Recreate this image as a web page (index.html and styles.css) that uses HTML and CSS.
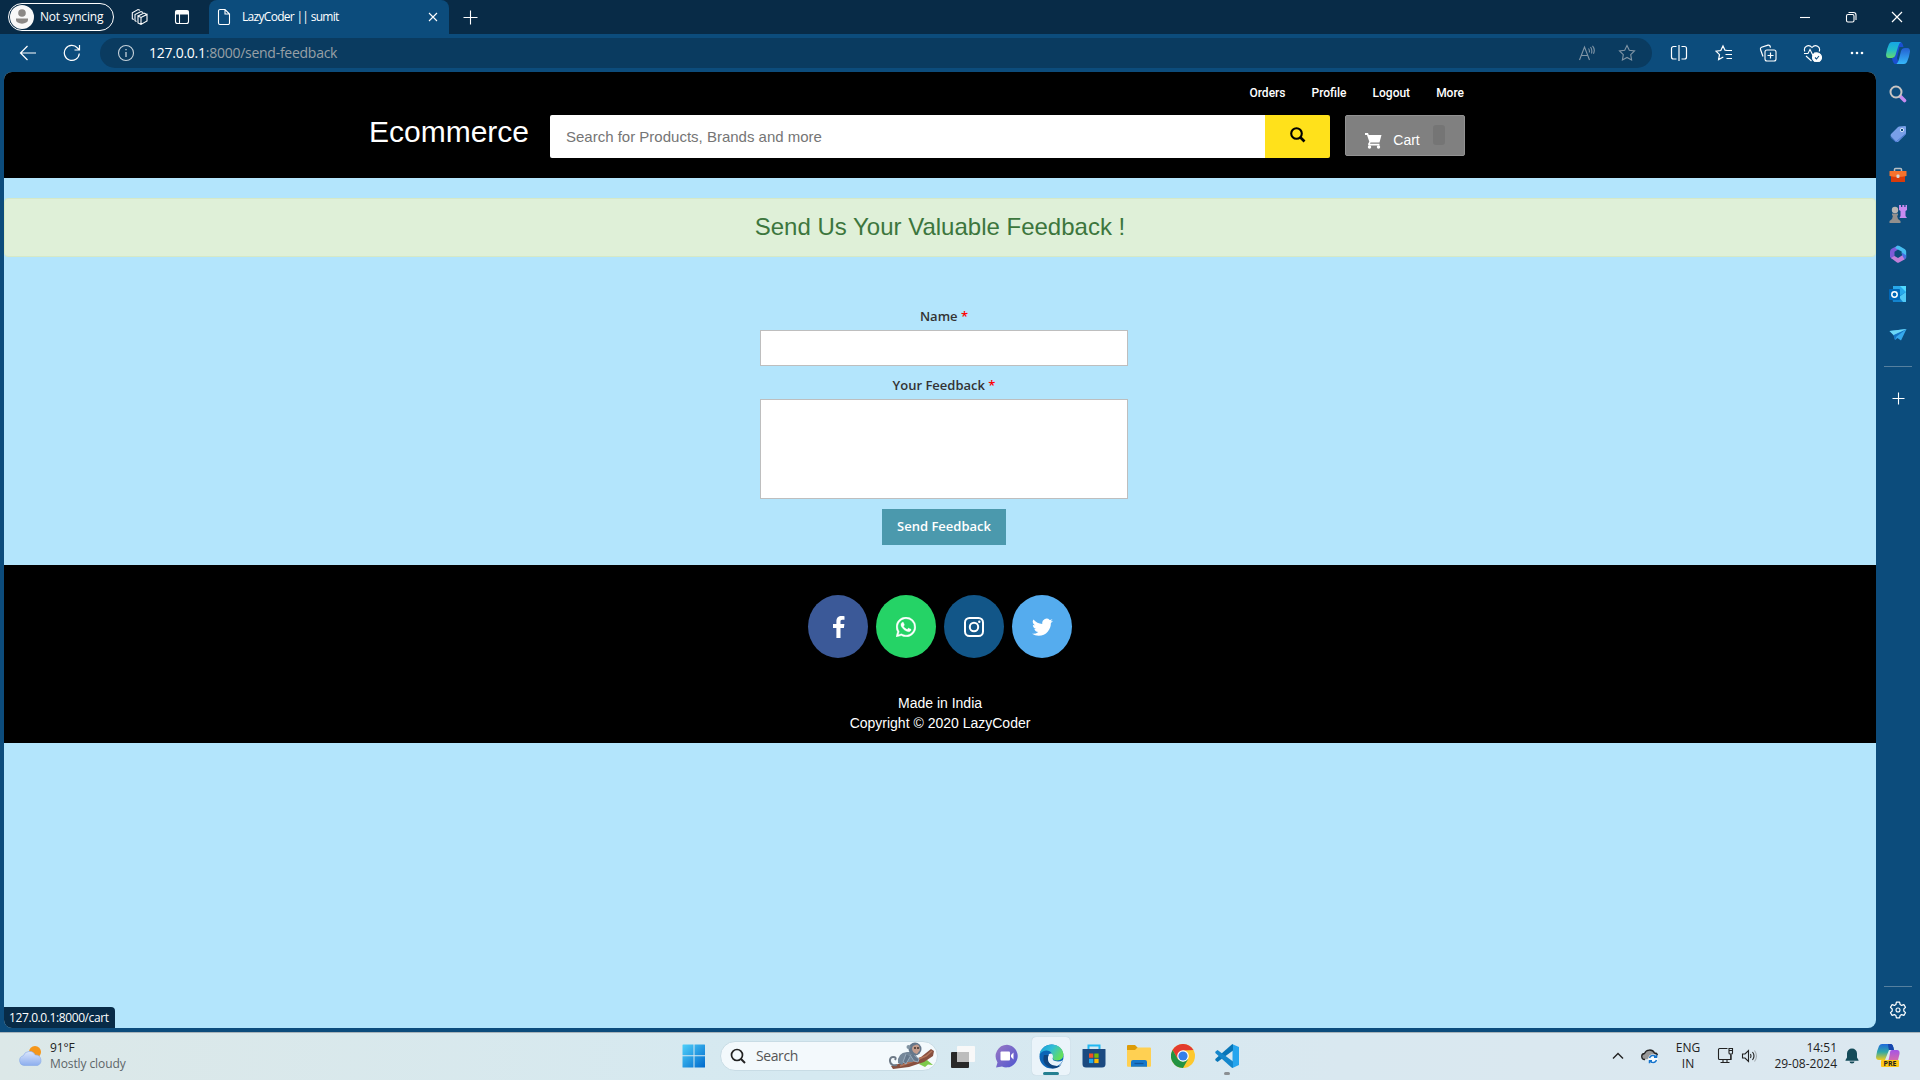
FILE: index.html
```html
<!DOCTYPE html>
<html lang="en">
<head>
<meta charset="utf-8">
<title>LazyCoder || sumit</title>
<link rel="stylesheet" href="styles.css">
</head>
<body>
<div class="browser">
  <header class="titlebar">
    <div class="profile"><svg width="24" height="24" viewBox="0 0 24 24"><circle cx="12" cy="12" r="12" fill="#f8f8f8"/><circle cx="12" cy="8" r="3.8" fill="#8b8886"/><path d="M6 13.500h12v1.500a6 3.700 0 0 1-12 0z" fill="#8b8886"/></svg><span>Not syncing</span></div>
    <svg class="workspaces line" width="18" height="18" viewBox="0 0 18 18"><path d="M7 8l3 1.500 6-3v6.500l-6 3.500-3-1.500zM10 9.500v7M7 8l6-3 3 1.500M5.500 13.500L4 12.700V6.500l6-3 2 .9M2.800 11.500l-1.500-.7V4.700L7 1.500l2 .8"/></svg>
    <svg class="tabs-menu line" width="16" height="16" viewBox="0 0 16 16"><rect x="1.500" y="1.500" width="13" height="13" rx="2"/><path d="M2 2h12v3H2z" fill="#fff"/><path d="M5.500 5v9.500"/></svg>
    <div class="tab">
      <svg class="line" width="14" height="18" viewBox="0 0 14 18"><path d="M3 1.500h5l4.500 4.500v9a1.500 1.500 0 0 1-1.500 1.500h-8A1.500 1.500 0 0 1 1.500 15V3A1.500 1.500 0 0 1 3 1.500zM8 1.500V6h4.500"/></svg>
      <span class="tab-title">LazyCoder || sumit</span>
      <svg class="line" width="10" height="10" viewBox="0 0 10 10"><path d="M1 1l8 8M9 1l-8 8"/></svg>
    </div>
    <svg class="new-tab line" width="15" height="15" viewBox="0 0 15 15"><path d="M7.500.5v14M.5 7.500h14"/></svg>
    <div class="window-buttons line">
      <svg width="12" height="12" viewBox="0 0 12 12"><path d="M1 6.500h10"/></svg>
      <svg width="12" height="12" viewBox="0 0 12 12"><rect x="1.500" y="3.500" width="7.500" height="7.500" rx="1.500"/><path d="M3.500 1.500H8.500A2.500 2.500 0 0 1 11 4V9"/></svg>
      <svg width="12" height="12" viewBox="0 0 12 12"><path d="M1 1l10 10M11 1L1 11" stroke-width="1.200"/></svg>
    </div>
  </header>

  <div class="toolbar">
    <div class="tool line"><svg width="18" height="16" viewBox="0 0 18 16"><path d="M8.500 1L1.500 8l7 7M1.500 8H17" stroke-width="1.200"/></svg></div>
    <div class="tool line"><svg width="18" height="18" viewBox="0 0 18 18"><path d="M16.300 9.500A7.500 7.500 0 1 1 14.500 4l2 2M16.500 1v5h-5" stroke-width="1.200"/></svg></div>
    <div class="address">
      <svg class="line dim-light" width="18" height="18" viewBox="0 0 18 18"><circle cx="9" cy="9" r="7.500"/><path d="M9 8v5M9 5v1.300" stroke-width="1.300"/></svg>
      <span class="url"><b>127.0.0.1</b>:8000/send-feedback</span>
      <svg class="line dim" width="18" height="16" viewBox="0 0 18 16"><path d="M1.500 15L6.500 2l5 13M3.300 10.500h6.500M10.500 3.500q1.300 1.500.8 4M12.500 2q2 2.500 1 6.500M14.500.8q3 3.500 1 8"/></svg>
      <svg class="line dim star" width="18" height="18" viewBox="0 0 18 18"><path d="M9 1.500l2.300 4.800 5.200.7-3.800 3.700.9 5.300L9 13.500 4.400 16l.9-5.300L1.500 7l5.200-.7z"/></svg>
    </div>
    <div class="tool line"><svg width="18" height="18" viewBox="0 0 18 18"><path d="M6.500 2.500h-3a2 2 0 0 0-2 2v8.500a2 2 0 0 0 2 2h3M11.500 2.500h3a2 2 0 0 1 2 2v8.500a2 2 0 0 1-2 2h-3M9 1v16" stroke-width="1.200"/></svg></div>
    <div class="tool line"><svg width="18" height="18" viewBox="0 0 18 18"><path d="M12 6.500l-2-.3-2-4.200-2.200 4.500-4.800.7 3.500 3.400-.9 5 4.700-2.600M10.500 6.500H17M10.500 10.500H17M11.500 14.500H17" stroke-width="1.200"/></svg></div>
    <div class="tool line"><svg width="18" height="18" viewBox="0 0 18 18"><rect x="6" y="6" width="11" height="11" rx="2"/><path d="M11.500 8.500v6M8.500 11.500h6M4 12.500l-2.500-7q-.5-1.500 1-2.200l6.500-2.200q2-.5 2.500 2.500" stroke-width="1.200"/></svg></div>
    <div class="tool line"><svg width="19" height="18" viewBox="0 0 19 18"><path d="M1.800 7.500C0 3 5.500-.5 9 3.500 12.500-.5 18 3 16.200 7.500M1 9.500h4l2-4 3 6 1.500-2.500h3M3 12l5.500 5"/><circle cx="14" cy="13.500" r="4.500" fill="#fff"/><path d="M12 13.500l1.500 1.500 2.500-3" stroke="#0c4c7c"/></svg></div>
    <div class="tool"><svg width="14" height="4" viewBox="0 0 14 4" fill="#fff"><circle cx="2" cy="2" r="1.300"/><circle cx="7" cy="2" r="1.300"/><circle cx="12" cy="2" r="1.300"/></svg></div>
    <div class="tool copilot"><svg width="24" height="24" viewBox="0 0 24 24"><defs><linearGradient id="cpA" x1="0" y1="0" x2="0" y2="1"><stop offset="0" stop-color="#15a5e5"/><stop offset=".5" stop-color="#23bdc7"/><stop offset="1" stop-color="#67d96c"/></linearGradient><linearGradient id="cpB" x1="0" y1="1" x2="0" y2="0"><stop offset="0" stop-color="#36b8fb"/><stop offset="1" stop-color="#245fd1"/></linearGradient></defs><path d="M9 1h5q2.500 0 3.500 5h-4L11 17l2 6H9.500Q7 23 6 17h2z" fill="#1a4fd0"/><path d="M6 1h9q-2 1-3 5l-2.500 8q-1 3-4 3H2.500Q0 17 0 13.500Q1 7 3 3q1-2 3-2z" fill="url(#cpA)"/><path d="M18 23h-7.500q1.500-1 2.500-5l2-8q1-3 4-3h2.500q2.500 0 2.500 3.500Q23 17 21 21q-1 2-3 2z" fill="url(#cpB)"/></svg></div>
  </div>

  <div class="workspace">
    <main class="page">
      <nav class="shop-nav">
        <div class="shop-inner">
          <div class="links"><a>Orders</a><a>Profile</a><a>Logout</a><a>More</a></div>
          <div class="search-row">
            <h1 class="brand">Ecommerce</h1>
            <div class="search-box"><span>Search for Products, Brands and more</span></div>
            <button class="search-button"><svg width="16" height="16" viewBox="0 0 16 16"><circle cx="6.500" cy="6.500" r="5.300" fill="none" stroke="#000" stroke-width="2.100"/><path d="M10.500 10.500l4 4" stroke="#000" stroke-width="2.600"/></svg></button>
            <button class="cart"><svg width="17" height="17" viewBox="0 0 17 17" fill="#fff"><path d="M0 1h3l.8 2H16.500l-2 7.500H5.500l-.5 1.300h9.500v1.700H3.500l-.5-1.500 1.300-2.300L2 3H0z"/><circle cx="4.500" cy="15" r="1.700"/><circle cx="13.500" cy="15" r="1.700"/></svg><span>Cart</span><i></i></button>
          </div>
        </div>
      </nav>
      <div class="alert">Send Us Your Valuable Feedback !</div>
      <form class="feedback">
        <label>Name <em>*</em></label>
        <div class="field"></div>
        <label>Your Feedback <em>*</em></label>
        <div class="field area"></div>
        <button class="send" type="button">Send Feedback</button>
      </form>
      <footer class="site-footer">
        <div class="social">
          <a class="facebook"><svg width="13" height="22" viewBox="0 0 13 22" fill="#fff"><path d="M12.500.2v3.500H10.400C8.800 3.700 8.500 4.500 8.500 5.600V8.100h3.900l-.5 3.900H8.500V22H4.400V12H1V8.100h3.400V5.200C4.400 1.800 6.500 0 9.500 0c1.400 0 2.700.1 3 .2z"/></svg></a>
          <a class="whatsapp"><svg width="20" height="20" viewBox="0 0 16 16" fill="#fff" stroke="#fff" stroke-width=".3"><path d="M13.601 2.326A7.854 7.854 0 0 0 7.994 0C3.627 0 .068 3.558.064 7.926c0 1.399.366 2.760 1.057 3.965L0 16l4.204-1.102a7.933 7.933 0 0 0 3.790.965h.004c4.368 0 7.926-3.558 7.930-7.930A7.898 7.898 0 0 0 13.600 2.326zM7.994 14.521a6.573 6.573 0 0 1-3.356-.920l-.240-.144-2.494.654.666-2.433-.156-.251a6.560 6.560 0 0 1-1.007-3.505c0-3.626 2.957-6.584 6.591-6.584a6.560 6.560 0 0 1 4.660 1.931 6.557 6.557 0 0 1 1.928 4.660c-.004 3.639-2.961 6.592-6.592 6.592zm3.615-4.934c-.197-.099-1.170-.578-1.353-.646-.182-.065-.315-.099-.445.099-.133.197-.513.646-.627.775-.114.133-.232.148-.430.050-.197-.100-.836-.308-1.592-.985-.590-.525-.985-1.175-1.103-1.372-.114-.198-.011-.304.088-.403.087-.088.197-.232.296-.346.100-.114.133-.198.198-.330.065-.134.034-.248-.015-.347-.050-.099-.445-1.076-.612-1.470-.160-.389-.323-.335-.445-.340-.114-.007-.247-.007-.380-.007a.729.729 0 0 0-.529.247c-.182.198-.691.677-.691 1.654 0 .977.710 1.916.810 2.049.098.133 1.394 2.132 3.383 2.992.470.205.840.326 1.129.418.475.152.904.129 1.246.080.380-.058 1.171-.480 1.338-.943.164-.464.164-.860.114-.943-.049-.084-.182-.133-.380-.232z"/></svg></a>
          <a class="instagram"><svg width="20" height="20" viewBox="0 0 20 20" fill="none" stroke="#fff" stroke-width="2"><rect x="1" y="1" width="18" height="18" rx="4.500"/><circle cx="10" cy="10" r="4.200"/><circle cx="15.300" cy="4.700" r="1.200" fill="#fff" stroke="none"/></svg></a>
          <a class="twitter"><svg width="21" height="21" viewBox="0 0 16 16" fill="#fff"><path d="M5.026 15c6.038 0 9.341-5.003 9.341-9.334 0-.140 0-.282-.006-.422A6.685 6.685 0 0 0 16 3.542a6.658 6.658 0 0 1-1.889.518 3.301 3.301 0 0 0 1.447-1.817 6.533 6.533 0 0 1-2.087.793A3.286 3.286 0 0 0 7.875 6.030a9.325 9.325 0 0 1-6.767-3.429 3.289 3.289 0 0 0 1.018 4.382A3.323 3.323 0 0 1 .640 6.575v.045a3.288 3.288 0 0 0 2.632 3.218 3.203 3.203 0 0 1-.865.115 3.230 3.230 0 0 1-.614-.057 3.283 3.283 0 0 0 3.067 2.277A6.588 6.588 0 0 1 .780 13.580a6.320 6.320 0 0 1-.780-.045A9.344 9.344 0 0 0 5.026 15z"/></svg></a>
        </div>
        <p>Made in India<br>Copyright © 2020 LazyCoder</p>
      </footer>
      <div class="status">127.0.0.1:8000/cart</div>
    </main>
    <aside class="sidebar">
      <svg width="18" height="18" viewBox="0 0 18 18"><path d="M11.500 11.500l4 4" stroke="#c68bf0" stroke-width="3.600" stroke-linecap="round"/><circle cx="7" cy="7" r="5.500" fill="none" stroke="#c9c5c3" stroke-width="2"/></svg>
      <svg width="18" height="18" viewBox="0 0 18 18"><path d="M10 1.500l6-.5q1 0 1 1v6q0 1-.5 1.500l-7 7q-1.500 1-2.500 0l-5-5q-1-1.500 0-2.500l6.500-6.500q.5-.7 1.500-1z" fill="#789fe8"/><path d="M1.500 12l5.500 5 9.500-8" stroke="#4c79d2" fill="none"/><circle cx="13" cy="5" r="1.700" fill="#0c4c7c" stroke="#d4e2fb"/></svg>
      <svg width="18" height="18" viewBox="0 0 18 18"><path d="M5.500 5V3.500q0-1 1-1h5q1 0 1 1V5" fill="none" stroke="#b9bec2" stroke-width="1.500"/><path d="M2 9h14v6.500q0 .5-.5.5h-13q-.5 0-.5-.5z" fill="#d93b0b"/><path d="M1 5h16q.5 0 .5.500V10q-8.500 2-17 0V5.500Q.5 5 1 5z" fill="#f5722d"/><rect x="7.500" y="8.500" width="3" height="3.500" rx="1" fill="#d4d6d8"/></svg>
      <svg width="18" height="20" viewBox="0 0 18 20"><path d="M10 1h2v2h1.300V1h2v2h1.200V1H18v5l-1.500 1v5l1.500 2h-7.500l1-2V7L10 6z" fill="#c88af0"/><circle cx="6" cy="6" r="3.200" fill="#b8b5b3"/><path d="M3 9.500h6v2H8l1 3.500 2.500 2v2H.5v-2L3 15l1-3.500H3z" fill="#928f8d"/></svg>
      <svg width="18" height="18" viewBox="0 0 18 18"><path d="M4 3l5-2.500v4L5.500 6.700V12L3 14 1 12V7q0-3 3-4z" fill="#7c5bd8"/><path d="M8 .7l2 0 6 3.500q1.200 1 1.200 2.500v6l-4.500-4V6.600L6 3z" fill="#46bdf0"/><path d="M2 13l3.500-2 3.500 2 4-2.500V8l4 3.500q0 2-1.500 3L10 17.500q-1 .5-2 0z" fill="#c27fd9"/><path d="M13 10V7.500l4.200 3-.4 2.500-1.300 1.500z" fill="#456ee0"/></svg>
      <svg width="18" height="18" viewBox="0 0 18 18"><path d="M4 1h12q1 0 1 1v12H4z" fill="#28a8ea"/><path d="M11 1h6v6z" fill="#50d9ff"/><path d="M3 11h7l7-4v9q0 1-1 1H4z" fill="#1384cf"/><path d="M10 12l7-5v10h-3z" fill="#50c8f5"/><rect x="0" y="4" width="11" height="11" rx="1" fill="#0067b8"/><circle cx="5.500" cy="9.500" r="2.700" fill="none" stroke="#fff" stroke-width="1.500"/></svg>
      <svg width="18" height="16" viewBox="0 0 18 16"><path d="M.5 5L17.500 3 12 14.500 8.500 12 6 14 4.500 9z" fill="#35a8ec"/><path d="M17.500 3L7.500 10.500 6 14 4.500 9z" fill="#1575c5"/><path d="M.5 5L17.500 3 4.500 9z" fill="#6cd8f7"/></svg>
      <hr>
      <svg class="line" width="13" height="13" viewBox="0 0 13 13"><path d="M6.500.5v12M.5 6.500h12"/></svg>
      <hr class="bottom-rule">
      <svg class="line gear" width="18" height="18" viewBox="0 0 18 18"><path d="M7.400 1.200h3.200l.5 2.300 1.500.9 2.300-.8 1.600 2.700L14.800 8v2l1.700 1.700-1.600 2.700-2.300-.8-1.500.9-.5 2.300H7.400l-.5-2.300-1.500-.9-2.300.8-1.600-2.700L3.200 10V8L1.500 6.300l1.600-2.700 2.300.8 1.500-.9z" stroke-width="1.200" stroke-linejoin="round"/><circle cx="9" cy="9" r="2"/></svg>
    </aside>
  </div>
</div>

<div class="taskbar">
  <div class="weather">
    <svg width="25" height="22" viewBox="0 0 25 22"><defs><linearGradient id="cl" x1="0" y1="0" x2="0" y2="1"><stop offset="0" stop-color="#dbe6fc"/><stop offset="1" stop-color="#8daeee"/></linearGradient></defs><circle cx="17" cy="7" r="6" fill="#f59619"/><path d="M6 20.500a5 5 0 0 1-.7-9.800 6.500 6.500 0 0 1 11.900-.8A5.500 5.500 0 0 1 19.500 20.500z" fill="url(#cl)" stroke="#87a9e8" stroke-width=".6"/></svg>
    <p><strong>91°F</strong><br>Mostly cloudy</p>
  </div>
  <div class="apps">
    <svg width="24" height="24" viewBox="0 0 24 24"><defs><linearGradient id="win" x1="0" y1="0" x2="1" y2="1"><stop offset="0" stop-color="#4fd0fa"/><stop offset="1" stop-color="#0069cc"/></linearGradient></defs><path d="M1 .5h10.500V11.300H.5V1zM12.500.5h10q.5 0 .5.500V11.300H12.500zM.5 12.300h11V23.500H1q-.5 0-.5-.5zM12.500 12.300H23V23q0 .5-.5.500h-10z" fill="url(#win)"/></svg>
    <div class="task-search">
      <svg width="16" height="16" viewBox="0 0 16 16" fill="none" stroke="#222" stroke-width="1.700"><circle cx="7" cy="7" r="5.500"/><path d="M11 11l4 4" stroke-width="2"/></svg>
      <span>Search</span>
      <svg class="monkey" width="46" height="28" viewBox="0 0 46 28"><path d="M34 19l5-1 6 5-5-.5-3 2.500-6-3z" fill="#7cc94b"/><path d="M3 24l18-5 12-4L43 7l3 2-1 5-9 6-15 5-16 2z" fill="#88503f"/><path d="M12 24l14-5 12-5 6-5" stroke="#b3755b" stroke-width="1.500" fill="none"/><path d="M9 23c-8 2-9-8-4-8q4 0 2 3" stroke="#6d7986" stroke-width="2" fill="none"/><path d="M10 21q-1-10 9-11l6 0 4 5-4 5-5 0-3-1-3 4z" fill="#758799"/><path d="M18 12l-3 8 3 2 4-7M26 13l5 4-1 3-4-1-4-6" stroke="#9aabbc" stroke-width="1" fill="#65778b"/><circle cx="27" cy="7" r="6.500" fill="#65778b"/><circle cx="20.500" cy="5" r="2" fill="#8193a2"/><path d="M25 4q5-3 6 0l1 4-3 4q-5-1-5-6z" fill="#c39c8c"/><circle cx="27" cy="6" r=".9" fill="#33251f"/><circle cx="30" cy="6" r=".9" fill="#33251f"/></svg>
    </div>
    <svg class="task-view" width="24" height="23" viewBox="0 0 24 23"><rect x="0" y="7" width="18" height="16" rx="1" fill="#292929"/><rect x="6" y="1" width="18" height="16" rx="1" fill="#f8f8f8"/><rect x="6" y="7" width="12" height="10" fill="#bdbdbd"/></svg>
    <svg class="chat" width="24" height="24" viewBox="0 0 24 24"><defs><linearGradient id="ch" x1="0" y1="0" x2="1" y2="1"><stop offset="0" stop-color="#9a78c4"/><stop offset="1" stop-color="#4f57d0"/></linearGradient></defs><path d="M12 .8A11.300 11.300 0 1 1 7 22.500L1 23.500l1.500-5A11.500 11.500 0 0 1 12 .8z" fill="url(#ch)"/><rect x="5.500" y="7.500" width="9.500" height="9" rx="1" fill="#fff"/><path d="M16 11l2.500-2.500v7L16 13z" fill="#fff"/></svg>
    <div class="active-app">
      <svg width="25" height="25" viewBox="0 0 25 25"><defs><linearGradient id="eg" x1="0" y1="0" x2="1" y2=".5"><stop offset="0" stop-color="#179bd7"/><stop offset=".5" stop-color="#31bdd8"/><stop offset="1" stop-color="#63df5b"/></linearGradient></defs><circle cx="12.500" cy="12.500" r="12" fill="#0b65b7"/><path d="M.5 11Q2 1 13 .5 23 1 24.500 10q0 6-6.500 6.500-5 0-4-3.500-1-7-7-6.500Q2 7 .5 11z" fill="url(#eg)"/><path d="M10 10q4-2 4 3-2 4 5 4.500 3 0 5-1.500-4 8-11 6-7-5-3-12z" fill="#e9f3fa"/><path d="M9.500 11q-3 10 8.500 11 3 0 4.500-1.500-3 4-9 4Q2 21 5 11z" fill="#10457f"/></svg>
      <i></i>
    </div>
    <svg class="store" width="24" height="24" viewBox="0 0 24 24"><path d="M6.500 6V1.500h11V6" fill="none" stroke="#21b8f2" stroke-width="2"/><path d="M1 5h22q.5 0 .5.500V20q0 3.500-3.500 3.500H4Q.5 23.500.5 20V5.500Q.5 5 1 5z" fill="#1b4a80"/><path d="M7 9.500h4.300v4.300H7z" fill="#f25022"/><path d="M12.300 9.500h4.300v4.300h-4.300z" fill="#7fba00"/><path d="M7 14.800h4.300v4.300H7z" fill="#20a9ef"/><path d="M12.300 14.800h4.300v4.300h-4.300z" fill="#ffb900"/></svg>
    <svg class="folder" width="24" height="22" viewBox="0 0 24 22"><path d="M0 1q0-1 1-1h7l2.500 2.500V6H0z" fill="#dd9c08"/><path d="M0 5h8l2.500-2.500H23q1 0 1 1V21q0 .7-1 .7H1q-1 0-1-.7z" fill="#ffd052"/><path d="M4 21.700V17q0-2 2-2h12q2 0 2 2v4.700z" fill="#1778cb"/><path d="M7.500 18.500h9" stroke="#0f549b" stroke-width="1.300"/></svg>
    <svg class="chrome" width="24" height="24" viewBox="0 0 24 24"><circle cx="12" cy="12" r="12" fill="#fdc82e"/><path d="M1.600 6A12 12 0 0 1 22.400 6L12 6.500 6.800 15z" fill="#e33b2e"/><path d="M1.600 6A12 12 0 0 0 12 24l5.200-9L12 17.500l-5.200-2.500z" fill="#229342"/><circle cx="12" cy="12" r="5.800" fill="#fff"/><circle cx="12" cy="12" r="4.600" fill="#367fe9"/></svg>
    <div class="vscode"><svg width="24" height="24" viewBox="0 0 24 24"><path d="M17.500.3L24 3v18l-6.500 3z" fill="#26a5ee"/><path d="M18 0v6.500L2.500 18 .3 16.300V15L16.500.7z" fill="#0876b8"/><path d="M18 24v-6.500L2.500 6 .3 7.700V9l16.200 14.500z" fill="#1487cc"/></svg><i></i></div>
  </div>
  <div class="tray">
    <svg width="12" height="8" viewBox="0 0 12 8" fill="none" stroke="#222" stroke-width="1.400"><path d="M1 6.500l5-5 5 5"/></svg>
    <svg class="cloud" width="18" height="16" viewBox="0 0 18 16"><path d="M4 11.500a3 3 0 0 1-.5-6 5.500 5.500 0 0 1 10-.5Q17 5 16.500 8.500z" fill="#999"/><path d="M4 11.500a3 3 0 0 1-.5-6 5.500 5.500 0 0 1 10-.5Q16 5 16.500 7" fill="none" stroke="#222" stroke-width="1.300"/><circle cx="12" cy="11" r="4.800" fill="#f8fcff"/><path d="M8.500 10a3.600 3.600 0 0 1 6-1.500M15.500 6.800v2.500H13M15.500 12a3.600 3.600 0 0 1-6 1.500M8.500 15.200v-2.500H11" fill="none" stroke="#1674cc" stroke-width="1.500"/></svg>
    <span class="lang">ENG<br>IN</span>
    <svg class="monitor" width="17" height="17" viewBox="0 0 17 17" fill="none" stroke="#222" stroke-width="1.100"><path d="M10.500 1.500h-8a1 1 0 0 0-1 1v9a1 1 0 0 0 1 1h11.500V8M6 12.500v3M10 12.500v3M3.500 15.500h9"/><path d="M12 1.500h3.500v4.500a1 1 0 0 1-1 1h-1.500a1 1 0 0 1-1-1zM12 3.500h3.500M13.800 7v5.500"/></svg>
    <svg class="speaker" width="17" height="14" viewBox="0 0 17 14" fill="none" stroke="#222" stroke-width="1.100"><path d="M1.500 5H4l3.500-3.500v11L4 9H1.500zM9.500 5q1 2 0 4M11.500 3q3 4 0 8"/><path d="M13.500 1.500q4 5.500 0 11" stroke="#a6adb2"/></svg>
    <span class="clock">14:51<br>29-08-2024</span>
    <svg class="bell" width="14" height="16" viewBox="0 0 14 16" fill="#154b59"><path d="M7 .5a5 5 0 0 1 5 5v4l1.500 2.500v.8H.5V12L2 9.500v-4a5 5 0 0 1 5-5zM4.500 13.500h5a2.500 2 0 0 1-5 0z"/></svg>
    <div class="pre"><svg width="24" height="24" viewBox="0 0 24 24"><defs><linearGradient id="pa" x1="0" y1="0" x2="0" y2="1"><stop offset="0" stop-color="#1e69db"/><stop offset=".5" stop-color="#2fa7a7"/><stop offset="1" stop-color="#f0cc1c"/></linearGradient><linearGradient id="pb" x1="0" y1="0" x2="0" y2="1"><stop offset="0" stop-color="#a454e7"/><stop offset="1" stop-color="#f17688"/></linearGradient></defs><path d="M6 0h9q2 0 3 6h-5L9 16H3q-3 0-3-3Q1 6 3 2q1-2 3-2z" fill="url(#pa)"/><path d="M12 0h3q2 0 3 6h-5q-1-4-1-6z" fill="#1746ad"/><path d="M16 6h5q3 0 2.500 4Q22 17 20 22H10q2-3 3-8l1-5q0-3 2-3z" fill="url(#pb)"/></svg><b>PRE</b></div>
  </div>
</div>
</body>
</html>
```
FILE: styles.css
```css
* { box-sizing: border-box; }
body { margin: 0; width: 1920px; height: 1080px; overflow: hidden; font-family: "Open Sans", "Noto Sans", sans-serif; }
svg { display: block; flex: none; }
button { border: 0; padding: 0; margin: 0; font: inherit; }
p { margin: 0; }
.line { fill: none; stroke: #fff; stroke-width: 1.1; }

.browser { height: 1032px; background: #0c4c7c; display: flex; flex-direction: column; }
.titlebar { height: 34px; flex: none; background: #082b47; display: flex; align-items: center; color: #fff; font-size: 12px; padding-left: 8px; }
.profile { width: 106px; height: 28px; border: 1px solid #fff; border-radius: 14px; display: flex; align-items: center; gap: 6px; padding-left: 1px; white-space: nowrap; letter-spacing: -.2px; font-weight: 500; }
.profile span, .tab-title { padding-bottom: 1px; }
.workspaces { margin-left: 17px; }
.tabs-menu { margin-left: 25px; }
.tab { align-self: stretch; margin-left: 19px; width: 240px; background: #0c4c7c; border-radius: 8px 8px 0 0; display: flex; align-items: center; padding: 0 11px 0 8px; }
.tab-title { flex: 1; margin-left: 11px; letter-spacing: -.7px; }
.new-tab { margin-left: 14px; }
.window-buttons { margin-left: auto; display: flex; gap: 34px; padding-right: 17px; }

.toolbar { height: 38px; flex: none; display: flex; align-items: center; padding-left: 6px; }
.tool { width: 44.500px; display: flex; justify-content: center; flex: none; }
.toolbar > .tool:nth-child(-n+2) { width: 44px; }
.address { width: 1552px; height: 30px; flex: none; margin: 0 5px 0 6px; border-radius: 15px; background: #0a3b60; display: flex; align-items: center; padding: 0 16px 0 17px; }
.url { flex: 1; margin-left: 14px; padding-bottom: 1px; color: #98a0a6; font-size: 14px; letter-spacing: -.26px; }
.url b { font-weight: 400; color: #fff; }
.dim { stroke: #8095a6; }
.dim-light { stroke: #c6d2db; }
.star { margin-left: 22px; }
.toolbar > .copilot { width: 36px; }

.workspace { flex: 1; display: flex; padding: 0 0 4px 4px; }
.page { position: relative; width: 1872px; border-radius: 8px; overflow: hidden; background: #b3e5fc; font-family: "Liberation Sans", Arial, sans-serif; }
.shop-nav { height: 106px; background: #000; color: #fff; padding-left: 365px; }
.shop-inner { width: 1096px; padding-top: 12px; }
.links { display: flex; justify-content: flex-end; gap: 26px; font: 500 12px/18px Roboto, sans-serif; padding-right: 1px; }
.search-row { display: flex; align-items: flex-start; padding-top: 13px; }
.brand { margin: -1px 0 0; width: 181px; font-weight: 400; font-size: 30px; line-height: 36px; }
.search-box { width: 715px; height: 43px; background: #fff; border-radius: 2px 0 0 2px; color: #757575; font-size: 15px; line-height: 43px; padding-left: 16px; }
.search-button { width: 65px; height: 43px; background: #ffe11b; border-radius: 0 2px 2px 0; display: flex; justify-content: center; padding-top: 12px; }
.cart { width: 120px; height: 41px; margin-left: 15px; background: #808080; border: 1px solid #929292; border-radius: 2px; color: #fff; display: flex; font-size: 14px; line-height: 16px; padding: 16px 0 0 19px; }
.cart span { margin: 0 0 0 11px; width: 27px; }
.cart i { width: 12px; height: 20px; margin: -7px 0 0 13px; border-radius: 3px; background: #757575; }
.alert { height: 59px; margin-top: 20px; border: 1px solid #d6e9c6; border-radius: 4px; background: #dff0d8; color: #3c763d; font-size: 24px; line-height: 55px; text-align: center; }
.feedback { height: 308px; margin-left: 8px; padding-top: 48px; display: flex; flex-direction: column; align-items: center; font-family: "Open Sans", "Noto Sans", sans-serif; font-weight: 600; color: #333; }
.feedback label { height: 25px; font-size: 13px; line-height: 22px; }
.feedback em { color: #f00; font-style: normal; }
.field { width: 368px; height: 36px; flex: none; background: #fff; border: 1px solid #bebebe; margin-bottom: 8px; }
.field.area { height: 100px; margin-bottom: 10px; }
.send { width: 124px; height: 36px; flex: none; padding-bottom: 2px; background: #4b99ad; color: #fff; font-size: 13px; font-weight: 600; }
.site-footer { height: 178px; background: #000; color: #fff; padding-top: 30px; font-size: 14px; line-height: 20px; text-align: center; }
.social { display: flex; justify-content: center; gap: 8px; margin-bottom: 35px; }
.social a { width: 60px; height: 63px; border-radius: 50%; display: flex; align-items: center; justify-content: center; }
.facebook { background: #3b5998; }
.whatsapp { background: #25d366; }
.instagram { background: #125688; }
.twitter { background: #55acee; }
.status { position: absolute; left: 0; bottom: 0; width: 111px; height: 21px; background: #082b47; border-top-right-radius: 4px; color: #fff; font: 12px/21px "Open Sans", sans-serif; letter-spacing: -.4px; padding-left: 5px; white-space: nowrap; }

.sidebar { width: 44px; display: flex; flex-direction: column; align-items: center; padding-top: 13px; gap: 22px; }
.sidebar > svg:nth-of-type(3) { position: relative; top: 1px; }
.sidebar > svg:nth-of-type(4) { margin: -1px 0; }
.sidebar > svg:nth-of-type(7) { margin: 1px 0; }
.sidebar hr { width: 28px; height: 1px; border: 0; background: #56809f; margin: 1px 0 3px; flex: none; }
.sidebar .bottom-rule { margin: auto 0 0; }
.gear { margin: -8px 0 9px; }

.taskbar { height: 48px; border-top: 1px solid #a9b4ba; background: linear-gradient(90deg, #dce8e8, #d5e9f1 42%, #d9e8f0 70%, #dce8f0); display: grid; grid-template-columns: 682px 618px 1fr; font-size: 12px; line-height: 16px; color: #222; padding-bottom: 2px; }
.taskbar > div { display: flex; align-items: center; }
.weather { padding-left: 18px; gap: 7px; color: #5d6568; white-space: nowrap; letter-spacing: -.1px; }
.weather strong { font-weight: 400; color: #222; }
.apps { padding-top: 1px; }
.task-search { width: 218px; height: 30px; margin: -1px 13px 0 14px; border: 1px solid #c8dce5; border-radius: 15px; background: #f3f9fc; display: flex; align-items: center; padding-left: 9px; font-size: 14px; color: #555; letter-spacing: -.4px; }
.task-search span { flex: 1; margin-left: 10px; }
.task-search .monkey { margin-right: 3px; }
.chat { margin-left: 20px; }
.active-app { width: 38px; height: 38px; margin-left: 13px; border-radius: 4px; background: #ebf4fa; box-shadow: 0 0 1px #a8bac5; display: flex; flex-direction: column; align-items: center; padding-top: 7px; }
.active-app i { width: 16px; height: 3px; border-radius: 2px; background: #248091; margin-top: 3px; }
.store { margin-left: 12px; }
.folder { margin-left: 21px; }
.chrome { margin-left: 20px; }
.vscode { margin-left: 20px; height: 38px; padding-top: 7px; display: flex; flex-direction: column; align-items: center; }
.vscode i { width: 6px; height: 3px; border-radius: 2px; background: #8b8f92; margin-top: 4px; }
.tray { padding-left: 312px; white-space: nowrap; }
.cloud { margin-left: 17px; }
.lang { width: 30px; margin-left: 14px; text-align: center; }
.monitor { margin-left: 14px; }
.speaker { margin-left: 7px; }
.clock { width: 78px; margin-left: 1px; text-align: right; }
.bell { margin-left: 8px; }
.pre { width: 24px; height: 24px; margin-left: 17px; position: relative; }
.pre b { position: absolute; left: 5px; top: 16px; width: 18px; height: 7px; border-radius: 1px; background: #ffc718; font-size: 7px; line-height: 7px; text-align: center; }
```
